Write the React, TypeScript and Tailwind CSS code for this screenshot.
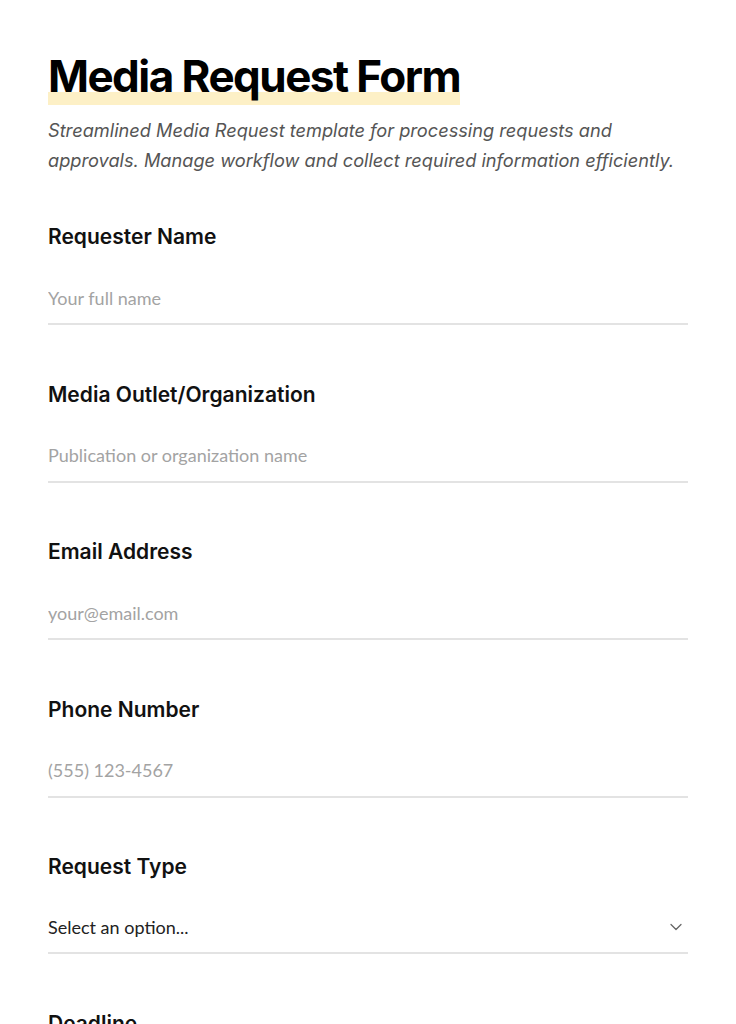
import { ChevronDown } from "lucide-react"

const fields = [
  { label: "Requester Name", placeholder: "Your full name", type: "text" },
  { label: "Media Outlet/Organization", placeholder: "Publication or organization name", type: "text" },
  { label: "Email Address", placeholder: "your@email.com", type: "email" },
  { label: "Phone Number", placeholder: "(555) 123-4567", type: "tel" },
]

export default function App() {
  return (
    <div className="min-h-screen overflow-hidden bg-white font-['Inter',sans-serif] text-[#111]">
      <div className="px-12 pt-12">
        <h1 className="inline-block bg-[linear-gradient(transparent_77%,#fdf0c6_77%)] text-[44px] font-bold leading-[57px] tracking-[-0.035em] text-black">
          Media Request Form
        </h1>
        <p className="mt-[10px] text-[18.2px] italic leading-[30px] text-[#555]">
          Streamlined Media Request template for processing requests and approvals. Manage workflow and collect
          required information efficiently.
        </p>

        <form className="mt-[48px] flex flex-col gap-[55.5px]">
          {fields.map((f) => (
            <div key={f.label} className="flex flex-col">
              <label className="text-[21px] font-semibold leading-[28px] text-[#111]">{f.label}</label>
              <input
                type={f.type}
                placeholder={f.placeholder}
                className="mt-[21px] h-[53px] border-b-2 border-[#e3e3e3] bg-transparent font-['Lato',sans-serif] text-[18px] outline-none placeholder:text-[#a3a3a3]"
              />
            </div>
          ))}
          <div className="flex flex-col">
            <label className="text-[21px] font-semibold leading-[28px] text-[#111]">Request Type</label>
            <div className="mt-[21px] flex h-[52px] items-center justify-between border-b-2 border-[#e3e3e3]">
              <span className="font-['Lato',sans-serif] text-[18px] text-[#222]">Select an option...</span>
              <ChevronDown className="mr-[2px] h-5 w-5 text-[#666]" strokeWidth={1.5} />
            </div>
          </div>
          <div className="flex flex-col">
            <label className="text-[21px] font-semibold leading-[28px] text-[#111]">Deadline</label>
            <input type="text" className="mt-[21px] h-[53px] border-b-2 border-[#e3e3e3] outline-none" />
          </div>
        </form>
      </div>
    </div>
  )
}
